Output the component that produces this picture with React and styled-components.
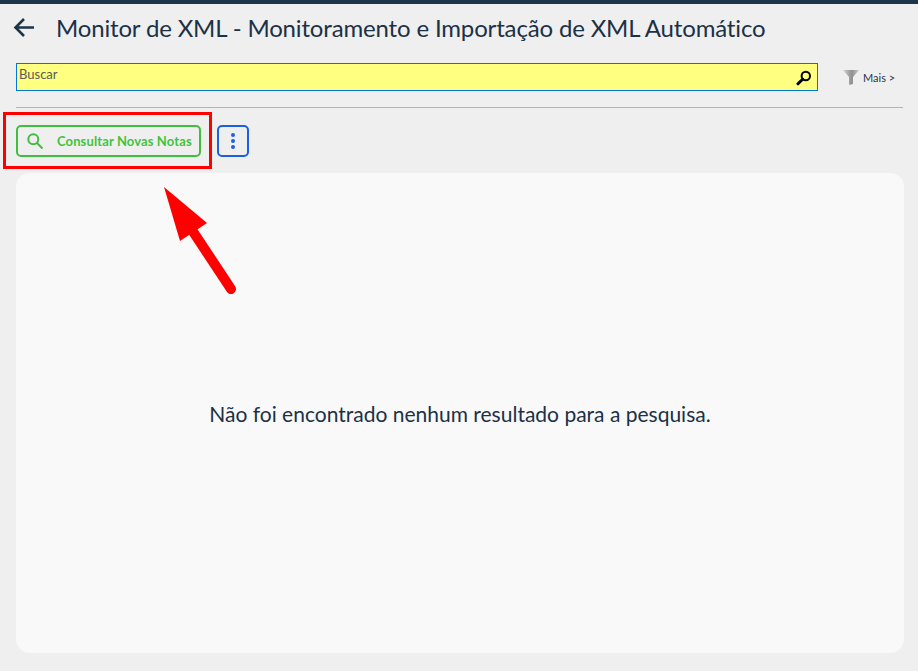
import React from "react";
import styled, { createGlobalStyle } from "styled-components";

const Global = createGlobalStyle`
  html, body { margin: 0; padding: 0; height: 100%; background: #efefef; }
  #root { height: 100%; }
  * { box-sizing: border-box; }
`;

const Page = styled.div`
  position: relative;
  width: 918px;
  height: 671px;
  overflow: hidden;
  background: #efefef;
  border-top: 4px solid #1c3548;
  font-family: Lato, "Open Sans", sans-serif;
  color: #1c3146;
`;

const Header = styled.header`
  display: flex;
  align-items: center;
  height: 47px;
  padding-left: 13px;
  gap: 22px;
`;

const BackButton = styled.span`
  display: flex;
  width: 21px;
  height: 21px;
`;

const Title = styled.h1`
  margin: 0;
  font-size: 24px;
  font-weight: 400;
  line-height: 47px;
  letter-spacing: -0.16px;
  white-space: nowrap;
`;

const SearchRow = styled.div`
  display: flex;
  align-items: center;
  margin-top: 12px;
  padding-left: 16px;
`;

const SearchBox = styled.div`
  display: flex;
  justify-content: space-between;
  width: 802px;
  height: 28px;
  padding: 2px 5px 0 2px;
  background: #ffff80;
  border: 1px solid #0078d7;
  font-size: 13px;
  line-height: 16px;
  color: #5a5a5a;
`;

const MoreLink = styled.div`
  display: flex;
  align-items: center;
  gap: 4px;
  margin-left: 25px;
  font-size: 11px;
  color: #2b3550;
`;

const Divider = styled.hr`
  width: 887px;
  height: 1px;
  margin: 16px 0 0 16px;
  border: 0;
  background: #b5b5b5;
`;

const Actions = styled.div`
  display: flex;
  align-items: center;
  gap: 16px;
  margin-top: 17px;
  padding-left: 16px;
`;

const SearchAction = styled.button`
  display: flex;
  align-items: center;
  gap: 14px;
  width: 185px;
  height: 32px;
  padding: 0 0 0 9px;
  background: transparent;
  border: 2px solid #41bd3f;
  border-radius: 5px;
  font-family: inherit;
  font-size: 13px;
  font-weight: 700;
  letter-spacing: 0.12px;
  color: #41c43c;
  white-space: nowrap;
`;

const KebabButton = styled.button`
  display: flex;
  align-items: center;
  justify-content: center;
  width: 32px;
  height: 32px;
  padding: 0;
  background: transparent;
  border: 2px solid #1a5fe6;
  border-radius: 5px;
`;

const Results = styled.main`
  display: flex;
  align-items: center;
  justify-content: center;
  width: 888px;
  height: 480px;
  margin: 16px 0 0 16px;
  background: #f9f9f9;
  border-radius: 14px;
  font-size: 21px;
  color: #1c3146;
`;

const Highlight = styled.div`
  position: absolute;
  left: 3px;
  top: 108px;
  width: 209px;
  height: 57px;
  border: 3px solid #ff0000;
  pointer-events: none;
`;

const Arrow = styled.svg`
  position: absolute;
  left: 150px;
  top: 166px;
  width: 100px;
  height: 130px;
  pointer-events: none;
`;

export default function App() {
  return (
    <Page>
      <Global />
      <Header>
        <BackButton>
          <svg width="21" height="21" viewBox="0 0 21 21" fill="none" stroke="#1c3548" strokeWidth="2.6">
            <path d="M21 10.5H2.5M11 2 2.5 10.5 11 19" />
          </svg>
        </BackButton>
        <Title>Monitor de XML - Monitoramento e Importação de XML Automático</Title>
      </Header>
      <SearchRow>
        <SearchBox>
          Buscar
          <svg width="16" height="16" viewBox="0 0 16 16" fill="none" stroke="#000" style={{ marginTop: 4 }}>
            <circle cx="9.8" cy="6" r="4.2" strokeWidth="2" />
            <path d="M6.6 9.2 2 13.8" strokeWidth="3" strokeLinecap="round" />
          </svg>
        </SearchBox>
        <MoreLink>
          <svg width="16" height="15" viewBox="0 0 16 15">
            <defs>
              <linearGradient id="funnel" x1="0" x2="1" y1="0" y2="0">
                <stop offset="0" stopColor="#d4d4d4" />
                <stop offset="0.55" stopColor="#8f8f8f" />
                <stop offset="1" stopColor="#c8c8c8" />
              </linearGradient>
            </defs>
            <path d="M0 0H16L10 7V14L6 15V7Z" fill="url(#funnel)" />
          </svg>
          Mais &gt;
        </MoreLink>
      </SearchRow>
      <Divider />
      <Actions>
        <SearchAction>
          <svg width="16" height="16" viewBox="0 0 16 16" fill="none" stroke="#41bd3f" strokeWidth="2">
            <circle cx="6.300" cy="6.300" r="5" />
            <path d="M10 10 15.500 15.500" />
          </svg>
          Consultar Novas Notas
        </SearchAction>
        <KebabButton>
          <svg width="4" height="16" viewBox="0 0 4 16" fill="#1a5fe6">
            <circle cx="2" cy="2" r="2" />
            <circle cx="2" cy="8" r="2" />
            <circle cx="2" cy="14" r="2" />
          </svg>
        </KebabButton>
      </Actions>
      <Results>Não foi encontrado nenhum resultado para a pesquisa.</Results>
      <Highlight />
      <Arrow viewBox="0 0 100 130">
        <path d="M14 17 57 53 30 71Z" fill="#ff0000" />
        <path d="M42 60 81 119" stroke="#ff0000" strokeWidth="10" strokeLinecap="round" fill="none" />
      </Arrow>
    </Page>
  );
}
